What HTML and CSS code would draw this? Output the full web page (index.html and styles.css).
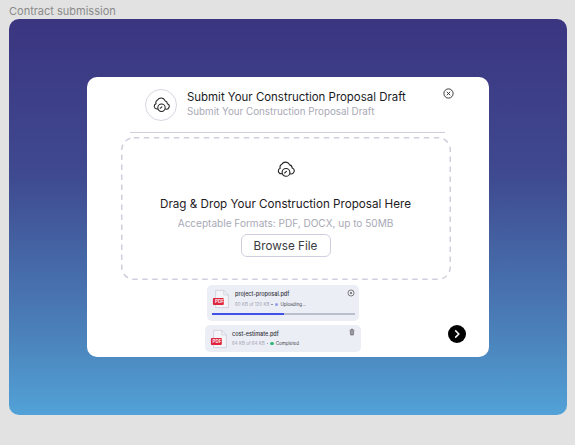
FILE: index.html
```html
<!DOCTYPE html>
<html lang="en">
<head>
    <meta charset="UTF-8">
    <title>Contract submission</title>
    <link rel="stylesheet" href="styles.css">
</head>
<body>
    <svg class="defs" width="0" height="0">
        <symbol id="cloud" viewBox="0 0 18 18">
            <path d="M5 13.8H4.2a2.9 2.9 0 0 1-1-5.6 3.2 3.2 0 0 1 1.6-3.9A4.4 4.4 0 0 1 12.7 4.9a3.4 3.4 0 0 1 2.5 3.2 2.9 2.9 0 0 1-2 5.6" fill="none" stroke="currentColor" stroke-width="1.1" stroke-linecap="round"/>
            <circle cx="9" cy="12.4" r="3.9" fill="#fff" stroke="currentColor" stroke-width="1.1"/>
            <path d="M7.6 13l1.8-1.6" fill="none" stroke="currentColor" stroke-width="1.1" stroke-linecap="round"/>
        </symbol>
        <symbol id="pdf" viewBox="0 0 22 22">
            <path d="M4 1.5h9l5 5v14H4z" fill="#f4f5f9" stroke="#c5c8d4" stroke-width="0.8"/>
            <path d="M13 1.5v5h5" fill="none" stroke="#c5c8d4" stroke-width="0.8"/>
            <rect x="1" y="10" width="12" height="7.5" rx="1" fill="#e0263f"/>
        </symbol>
    </svg>

    <h1 class="page-title">Contract submission</h1>

    <div class="panel">
        <div class="card">
            <div class="card-header">
                <div class="header-icon">
                    <svg class="icon-md"><use href="#cloud"/></svg>
                </div>
                <div>
                    <div class="header-title">Submit Your Construction Proposal Draft</div>
                    <div class="header-sub">Submit Your Construction Proposal Draft</div>
                </div>
                <svg class="close-btn" viewBox="0 0 10 10">
                    <circle cx="5" cy="5" r="4.2" fill="none" stroke="#222" stroke-width="0.8"/>
                    <path d="M3.4 3.4l3.2 3.2M6.6 3.4L3.4 6.6" stroke="#222" stroke-width="0.8"/>
                </svg>
            </div>
            <div class="divider"></div>

            <div class="dropzone">
                <svg class="dash-border" viewBox="0 0 330 143">
                    <rect x="0.75" y="0.75" width="328.5" height="141.5" rx="12" fill="none" stroke="#cfcfdd" stroke-width="1.5" stroke-dasharray="5.5 4.5"/>
                </svg>
                <svg class="icon-lg"><use href="#cloud"/></svg>
                <div class="drop-title">Drag &amp; Drop Your Construction Proposal Here</div>
                <div class="drop-sub">Acceptable Formats: PDF, DOCX, up to 50MB</div>
                <button class="browse-btn">Browse File</button>
            </div>

            <div class="file-row file-uploading">
                <svg class="file-icon"><use href="#pdf"/></svg>
                <span class="pdf-label">PDF</span>
                <div class="file-info">
                    <div class="file-name">project-proposal.pdf</div>
                    <div class="file-meta">60 KB of 120 KB <i class="sep"></i> <i class="dot dot-blue"></i> <b>Uploading...</b></div>
                </div>
                <svg class="file-action" viewBox="0 0 10 10">
                    <circle cx="5" cy="5" r="3.8" fill="none" stroke="#555" stroke-width="0.9"/>
                    <path d="M3.6 3.6l2.8 2.8M6.4 3.6L3.6 6.4" stroke="#555" stroke-width="0.9"/>
                </svg>
                <div class="progress"><div class="progress-fill" style="width: 50%"></div></div>
            </div>

            <div class="file-row file-done">
                <svg class="file-icon"><use href="#pdf"/></svg>
                <span class="pdf-label">PDF</span>
                <div class="file-info">
                    <div class="file-name">cost-estimate.pdf</div>
                    <div class="file-meta">64 KB of 64 KB <i class="sep"></i> <i class="dot dot-green"></i> <b>Completed</b></div>
                </div>
                <svg class="file-action" viewBox="0 0 10 10">
                    <path d="M2 2.8h6M4 2.6V1.4h2v1.2M2.8 3l.4 5.8h3.6L7.2 3" fill="#9a9ba6" stroke="#666" stroke-width="0.8"/>
                </svg>
            </div>

            <button class="next-btn">
                <svg viewBox="0 0 10 10" width="10" height="10">
                    <path d="M3.2 1.4L6.8 5 3.2 8.6" fill="none" stroke="#fff" stroke-width="1.5"/>
                </svg>
            </button>
        </div>
    </div>
</body>
</html>
```

FILE: styles.css
```css
* {
    box-sizing: border-box;
}

body {
    margin: 0;
    height: 445px;
    overflow: hidden;
    background-color: #e2e2e2;
    font-family: Inter, 'Liberation Sans', sans-serif;
    color: #1f2024;
}

.defs {
    position: absolute;
}

.page-title {
    margin: 0;
    padding: 4px 0 0 9px;
    height: 19px;
    font-size: 11px;
    line-height: 15px;
    font-weight: 400;
    color: #8a8a8a;
}

.panel {
    margin-left: 9px;
    width: 558px;
    height: 396px;
    border-radius: 10px;
    background: linear-gradient(180deg, #3b3580 0%, #3f4a90 40%, #4b82bb 80%, #52a2d7 100%);
    display: flex;
    align-items: center;
    justify-content: center;
}

.card {
    position: relative;
    width: 402px;
    height: 280px;
    background-color: #fff;
    border-radius: 10px;
    display: flex;
    flex-direction: column;
    align-items: center;
    padding-top: 11px;
}

.card-header {
    position: relative;
    width: 402px;
    padding-left: 58px;
    height: 33px;
    display: flex;
    align-items: center;
    gap: 10px;
}

.header-icon {
    width: 32px;
    height: 32px;
    border: 1px solid #d6d6e2;
    border-radius: 50%;
    display: flex;
    align-items: center;
    justify-content: center;
}

.icon-md {
    width: 17px;
    height: 17px;
    color: #222;
}

.icon-lg {
    width: 18px;
    height: 18px;
    color: #222;
    margin-top: 23px;
}

.header-title {
    font-size: 11.45px;
    line-height: 15px;
    font-weight: 400;
    color: #1a1b1f;
}

.header-sub {
    font-size: 9.8px;
    line-height: 14px;
    color: #a9a9b6;
}

.close-btn {
    position: absolute;
    top: 0;
    right: 35px;
    width: 11px;
    height: 11px;
}

.divider {
    width: 315px;
    height: 1px;
    margin: 11px 0 0 -2px;
    background-color: #cfcfdf;
}

.dropzone {
    position: relative;
    width: 330px;
    height: 143px;
    margin: 4px 0 0 -5px;
    display: flex;
    flex-direction: column;
    align-items: center;
}

.dash-border {
    position: absolute;
    left: 0;
    top: 0;
    width: 330px;
    height: 143px;
}

.drop-title {
    margin-top: 19px;
    font-size: 11.65px;
    line-height: 15px;
    font-weight: 400;
    color: #1f2024;
}

.drop-sub {
    margin-top: 4px;
    font-size: 10.05px;
    line-height: 14px;
    color: #a9a9b6;
}

.browse-btn {
    position: relative;
    margin-top: 4px;
    width: 90px;
    height: 23px;
    padding: 0;
    background-color: #fff;
    border: 1px solid #cfcfdf;
    border-radius: 6px;
    font-family: inherit;
    font-size: 11.7px;
    color: #3a3b42;
}

.file-row {
    position: relative;
    display: flex;
    align-items: flex-start;
    background-color: #eceef6;
    border-radius: 5px;
}

.file-uploading {
    width: 152px;
    height: 36px;
    margin-top: 5px;
    margin-left: -10px;
    padding: 4px 0 0 5px;
}

.file-done {
    width: 156px;
    height: 27px;
    margin-top: 4px;
    margin-left: -10px;
    padding: 4px 0 0 5px;
}

.file-icon {
    width: 20px;
    height: 20px;
    flex: none;
}

.pdf-label {
    position: absolute;
    left: 8px;
    top: 13px;
    font-size: 4.5px;
    line-height: 7px;
    font-weight: 600;
    color: #fff;
}

.file-done .pdf-label {
    left: 7.5px;
}

.file-info {
    margin: 1px 0 0 3px;
}

.file-done .file-info {
    margin-left: 2px;
}

.file-name {
    font-size: 5.5px;
    line-height: 8px;
    font-weight: 500;
    color: #33343a;
}

.file-meta {
    margin-top: 3px;
    font-size: 4.5px;
    line-height: 7px;
    color: #a0a1ae;
    display: flex;
    align-items: center;
    gap: 2px;
}

.file-done .file-meta {
    margin-top: 2px;
}

.file-meta b {
    font-weight: 400;
    color: #44454c;
}

.sep {
    width: 1.5px;
    height: 1.5px;
    border-radius: 50%;
    background-color: #888;
}

.dot {
    width: 3.5px;
    height: 3.5px;
    border-radius: 50%;
}

.dot-blue {
    background-color: #8f9bf0;
}

.dot-green {
    background-color: #35b67c;
}

.file-action {
    position: absolute;
    top: 4px;
    right: 4px;
    width: 8px;
    height: 8px;
}

.file-done .file-action {
    top: 3px;
    right: 5px;
}

.progress {
    position: absolute;
    left: 5px;
    bottom: 6px;
    width: 143px;
    height: 2px;
    background-color: #b9bfcd;
}

.progress-fill {
    height: 100%;
    background-color: #3f51e6;
}

.next-btn {
    position: absolute;
    left: 361px;
    top: 248px;
    width: 18px;
    height: 18px;
    padding: 0;
    border: none;
    border-radius: 50%;
    background-color: #000;
    display: flex;
    align-items: center;
    justify-content: center;
}
```
